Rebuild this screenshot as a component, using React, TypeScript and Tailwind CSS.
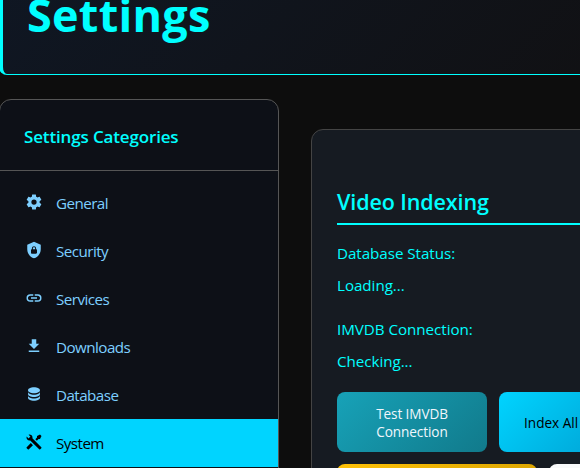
const icons = {
  cog: 'M12,15.5A3.5,3.5 0 0,1 8.5,12A3.5,3.5 0 0,1 12,8.5A3.5,3.5 0 0,1 15.5,12A3.5,3.5 0 0,1 12,15.5M19.43,12.97C19.47,12.65 19.5,12.33 19.5,12C19.5,11.67 19.47,11.34 19.43,11L21.54,9.37C21.73,9.22 21.78,8.95 21.66,8.73L19.66,5.27C19.54,5.05 19.27,4.96 19.05,5.05L16.56,6.05C16.04,5.66 15.5,5.32 14.87,5.07L14.5,2.42C14.46,2.18 14.25,2 14,2H10C9.75,2 9.54,2.18 9.5,2.42L9.13,5.07C8.5,5.32 7.96,5.66 7.44,6.05L4.95,5.05C4.73,4.96 4.46,5.05 4.34,5.27L2.34,8.73C2.21,8.95 2.27,9.22 2.46,9.37L4.57,11C4.53,11.34 4.5,11.67 4.5,12C4.5,12.33 4.53,12.65 4.57,12.97L2.46,14.63C2.27,14.78 2.21,15.05 2.34,15.27L4.34,18.73C4.46,18.95 4.73,19.03 4.95,18.95L7.44,17.94C7.96,18.34 8.5,18.68 9.13,18.93L9.5,21.58C9.54,21.82 9.75,22 10,22H14C14.25,22 14.46,21.82 14.5,21.58L14.87,18.93C15.5,18.67 16.04,18.34 16.56,17.94L19.05,18.95C19.27,19.03 19.54,18.95 19.66,18.73L21.66,15.27C21.78,15.05 21.73,14.78 21.54,14.63L19.43,12.97Z',
  shield: 'M12,1L3,5V11C3,16.55 6.84,21.74 12,23C17.16,21.74 21,16.55 21,11V5L12,1M12,7C13.4,7 14.8,8.1 14.8,9.5V11C15.4,11 16,11.6 16,12.3V15.8C16,16.4 15.4,17 14.7,17H9.2C8.6,17 8,16.4 8,15.7V12.2C8,11.6 8.6,11 9.2,11V9.5C9.2,8.1 10.6,7 12,7M12,8.2C11.2,8.2 10.5,8.7 10.5,9.5V11H13.5V9.5C13.5,8.7 12.8,8.2 12,8.2Z',
  link: 'M3.9,12C3.9,10.29 5.29,8.9 7,8.9H11V7H7A5,5 0 0,0 2,12A5,5 0 0,0 7,17H11V15.1H7C5.29,15.1 3.9,13.71 3.9,12M8,13H16V11H8V13M17,7H13V8.9H17C18.71,8.9 20.1,10.29 20.1,12C20.1,13.71 18.71,15.1 17,15.1H13V17H17A5,5 0 0,0 22,12A5,5 0 0,0 17,7Z',
  download: 'M5,20H19V18H5M19,9H15V3H9V9H5L12,16L19,9Z',
  database:
    'M12,3C7.58,3 4,4.79 4,7C4,9.21 7.58,11 12,11C16.42,11 20,9.21 20,7C20,4.79 16.42,3 12,3M4,9V12C4,14.21 7.58,16 12,16C16.42,16 20,14.21 20,12V9C20,11.21 16.42,13 12,13C7.58,13 4,11.21 4,9M4,14V17C4,19.21 7.58,21 12,21C16.42,21 20,19.21 20,17V14C20,16.21 16.42,18 12,18C7.58,18 4,16.21 4,14Z',
  tools:
    'M21.71 20.29L20.29 21.71A1 1 0 0 1 18.88 21.71L7 9.85A3.81 3.81 0 0 1 6 10A4 4 0 0 1 2.22 4.7L4.76 7.24L5.29 6.71L6.71 5.29L7.24 4.76L4.7 2.22A4 4 0 0 1 10 6A3.81 3.81 0 0 1 9.85 7L21.71 18.88A1 1 0 0 1 21.71 20.29M2.29 18.88A1 1 0 0 0 2.29 20.29L3.71 21.71A1 1 0 0 0 5.12 21.71L10.59 16.25L7.76 13.42M20 2L16 4V6L13.83 8.17L15.83 10.17L18 8H20L22 4Z',
};

const categories: { label: string; icon: keyof typeof icons; active?: boolean }[] = [
  { label: 'General', icon: 'cog' },
  { label: 'Security', icon: 'shield' },
  { label: 'Services', icon: 'link' },
  { label: 'Downloads', icon: 'download' },
  { label: 'Database', icon: 'database' },
  { label: 'System', icon: 'tools', active: true },
];

function Icon({ name }: { name: keyof typeof icons }) {
  return (
    <svg viewBox="0 0 24 24" className="mb-0.5 h-[18px] w-[18px] shrink-0 fill-current">
      <path fillRule="evenodd" d={icons[name]} />
    </svg>
  );
}

function Sidebar() {
  return (
    <aside className="-ml-px h-[500px] w-[280px] shrink-0 overflow-hidden rounded-xl border border-[#555] bg-[#0d1017]">
      <h3 className="h-[71px] border-b border-[#555] pt-[25px] pl-6 text-[17px] leading-6 font-semibold tracking-[-0.15px] whitespace-nowrap text-[#00ffff]">
        Settings Categories
      </h3>
      <nav className="pt-2">
        {categories.map(({ label, icon, active }) => (
          <a
            key={label}
            className={
              active
                ? 'flex h-12 items-center gap-[13px] bg-[#00d4ff] pl-[25px] text-black'
                : 'flex h-12 items-center gap-[13px] pl-[25px] text-[#7dcfff]'
            }
          >
            <Icon name={icon} />
            <span className="text-[15.2px] leading-6 tracking-[-0.55px]">{label}</span>
          </a>
        ))}
      </nav>
    </aside>
  );
}

function Status({ label, value }: { label: string; value: string }) {
  return (
    <div className="mb-5 flex flex-col gap-2 text-[15.2px] leading-6 tracking-[-0.05px] text-[#00ffff]">
      <p>{label}</p>
      <p>{value}</p>
    </div>
  );
}

function VideoIndexing() {
  return (
    <section className="mt-[30px] h-[500px] w-[600px] shrink-0 rounded-xl border border-[#444] bg-[#161b22] pt-[56px] pl-[25px]">
      <h2 className="mb-4 h-[39px] border-b-2 border-[#00ffff] text-[21.5px] leading-[32px] font-semibold tracking-[-0.1px] text-[#00ffff]">
        Video Indexing
      </h2>
      <Status label="Database Status:" value="Loading..." />
      <Status label="IMVDB Connection:" value="Checking..." />
      <div className="-mt-px flex flex-col gap-3 text-[13.6px] leading-[18px]">
        <div className="flex gap-3">
          <button className="h-[60px] w-[150px] rounded-lg bg-linear-135 from-[#17a2b8] to-[#117a8b] px-6 pt-0.5 tracking-[-0.1px] text-[#f0f6fc]">
            Test IMVDB Connection
          </button>
          <button className="h-[60px] w-[150px] rounded-lg bg-linear-135 from-[#00d4ff] to-[#0099cc] pt-0.5 pl-[25px] text-left whitespace-nowrap text-black">
            Index All Videos
          </button>
        </div>
        <div className="flex gap-3">
          <button className="h-[60px] w-[200px] rounded-lg bg-linear-135 from-[#ffc107] to-[#d39e00]" />
          <button className="h-[60px] w-[150px] rounded-lg bg-[#f8f9fa]" />
        </div>
      </div>
    </section>
  );
}

export default function App() {
  return (
    <div className="h-[468px] w-[580px] overflow-hidden bg-[#0d0d0d] font-['Open_Sans','Noto_Sans',sans-serif]">
      <header className="-mt-[60px] -ml-px h-[135px] w-[800px] rounded-lg border-b border-l-4 border-[#00ffff] bg-linear-135 from-[#0f1724] to-[#110f0f] pt-[45px] pl-6">
        <h1 className="text-[45px] leading-[60px] font-bold tracking-[0.25px] text-[#00ffff]">Settings</h1>
      </header>
      <main className="mt-6 flex gap-8">
        <Sidebar />
        <VideoIndexing />
      </main>
    </div>
  );
}
